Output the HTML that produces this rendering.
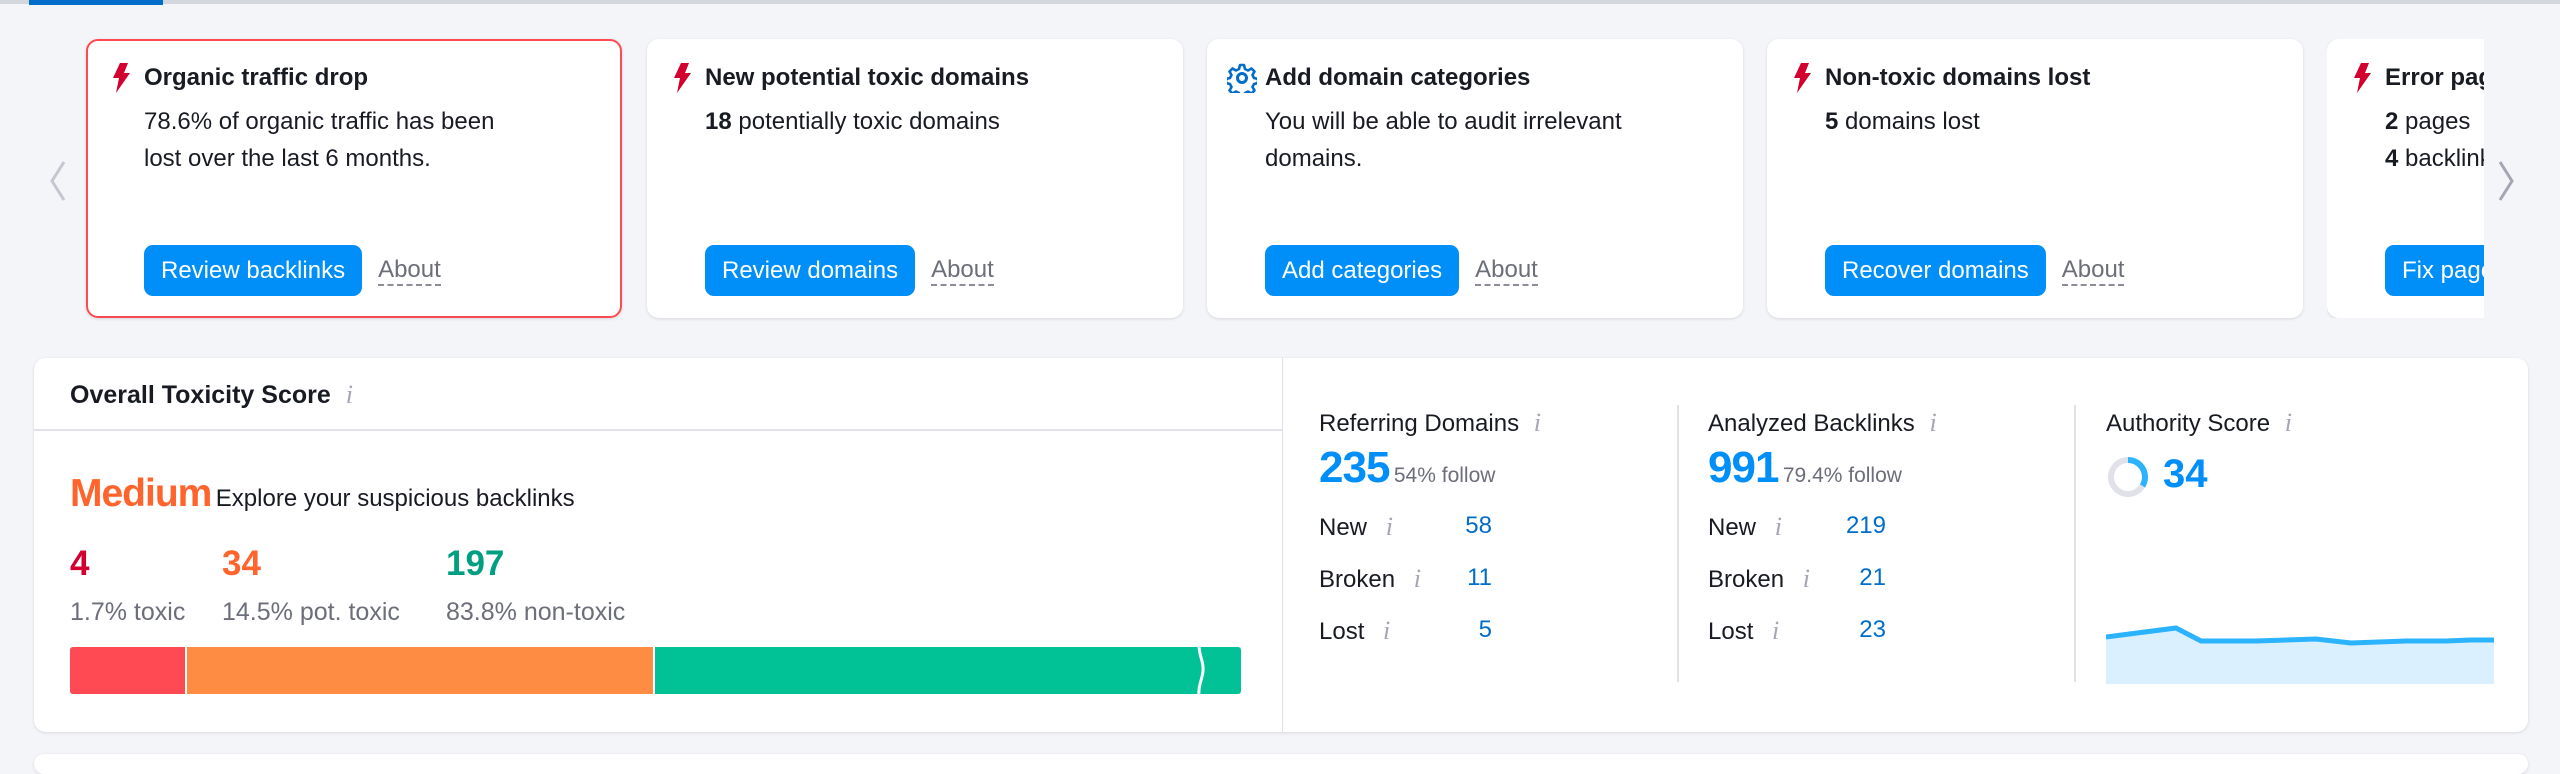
<!DOCTYPE html>
<html><head><meta charset="utf-8"><style>
*{box-sizing:border-box;margin:0;padding:0}
body{width:2560px;height:764px;background:#f4f5f9;font-family:"Liberation Sans",sans-serif;color:#191b23;position:relative;overflow:hidden}
.abs{position:absolute}
.card{position:absolute;top:39px;height:279px;width:536px;background:#fff;border-radius:12px;box-shadow:0 1px 3px rgba(0,0,0,.12)}
.card .ic{position:absolute;left:25px;top:24px}
.card .t{position:absolute;left:58px;top:24px;font-size:24px;font-weight:bold;line-height:30px;white-space:nowrap}
.card .b{position:absolute;left:58px;top:64px;font-size:24px;line-height:37px;width:380px}
.card .row{position:absolute;left:58px;top:206px;display:flex;align-items:center;white-space:nowrap}
.card .btn{height:51px;padding:0 17px;background:#008ff8;color:#fff;font-size:24px;line-height:51px;border-radius:9px}
.card .ab{margin-left:16px;font-size:24px;color:#6c6e79;line-height:28px;border-bottom:2px dashed #8a8c96}
.i{color:#a4a6b3;font-style:italic;font-family:"Liberation Serif",serif;font-size:26px}
.lbl{position:absolute;font-size:24px}
.val{position:absolute;font-size:24px;color:#006dca;text-align:right;width:60px}
</style></head><body>
<div class="abs" style="left:0;top:0;width:2560px;height:4px;background:#d5d7de"></div>
<div class="abs" style="left:29px;top:0;width:134px;height:5px;background:#006dca"></div>

<svg class="abs" style="left:46px;top:160px" width="22" height="42"><path d="M18 2 L6 21 L18 40" fill="none" stroke="#c5c7d0" stroke-width="3"/></svg>
<svg class="abs" style="left:2496px;top:160px" width="22" height="42"><path d="M4 2 L16 21 L4 40" fill="none" stroke="#a4a6b3" stroke-width="3"/></svg>

<div class="card" style="left:86px;outline:2px solid #ff4953;outline-offset:-2px">
<svg class="ic" width="20" height="30" viewBox="0 0 20 30"><path d="M9 0 H17 L13 10 H19 L5 30 L8 15 H2 Z" fill="#d1002f"/></svg>
<div class="t">Organic traffic drop</div>
<div class="b">78.6% of organic traffic has been lost over the last 6 months.</div>
<div class="row"><div class="btn">Review backlinks</div><div class="ab">About</div></div>
</div>
<div class="card" style="left:647px">
<svg class="ic" width="20" height="30" viewBox="0 0 20 30"><path d="M9 0 H17 L13 10 H19 L5 30 L8 15 H2 Z" fill="#d1002f"/></svg>
<div class="t">New potential toxic domains</div>
<div class="b"><b>18</b> potentially toxic domains</div>
<div class="row"><div class="btn">Review domains</div><div class="ab">About</div></div>
</div>
<div class="card" style="left:1207px">
<svg class="ic" width="30" height="30" viewBox="0 0 30 30" style="left:20px;top:24px"><circle cx="15" cy="15" r="4.5" fill="none" stroke="#006dca" stroke-width="3"/><path d="M13 2h4l1 4 3 1.5 3.5-2 3 3-2 3.5 1.5 3 4 1v4l-4 1-1.5 3 2 3.5-3 3-3.5-2-3 1.5-1 4h-4l-1-4-3-1.5-3.5 2-3-3 2-3.5-1.5-3-4-1v-4l4-1 1.5-3-2-3.5 3-3 3.5 2 3-1.5z" fill="none" stroke="#006dca" stroke-width="2.6" stroke-linejoin="round"/></svg>
<div class="t">Add domain categories</div>
<div class="b">You will be able to audit irrelevant domains.</div>
<div class="row"><div class="btn">Add categories</div><div class="ab">About</div></div>
</div>
<div class="card" style="left:1767px">
<svg class="ic" width="20" height="30" viewBox="0 0 20 30"><path d="M9 0 H17 L13 10 H19 L5 30 L8 15 H2 Z" fill="#d1002f"/></svg>
<div class="t">Non-toxic domains lost</div>
<div class="b"><b>5</b> domains lost</div>
<div class="row"><div class="btn">Recover domains</div><div class="ab">About</div></div>
</div>
<div class="abs" style="left:2327px;top:39px;width:157px;height:279px;overflow:hidden">
<div class="card" style="left:0;top:0">
<svg class="ic" width="20" height="30" viewBox="0 0 20 30"><path d="M9 0 H17 L13 10 H19 L5 30 L8 15 H2 Z" fill="#d1002f"/></svg>
<div class="t">Error pages</div>
<div class="b"><b>2</b> pages<br><b>4</b> backlinks</div>
<div class="row"><div class="btn">Fix pages</div></div>
</div></div>

<div class="abs" style="left:34px;top:358px;width:2494px;height:374px;background:#fff;border-radius:12px;box-shadow:0 1px 3px rgba(0,0,0,.12)"></div>
<div class="abs" style="left:1282px;top:358px;width:1px;height:374px;background:#e0e1e9"></div>
<div class="abs" style="left:34px;top:429px;width:1248px;height:2px;background:#e0e1e9"></div>
<div class="abs" style="left:70px;top:380px;font-size:25px;font-weight:bold;line-height:30px">Overall Toxicity Score <span class="i" style="font-weight:normal;margin-left:8px">i</span></div>
<div class="abs" style="left:70px;top:472px;white-space:nowrap"><span style="font-size:39px;font-weight:bold;color:#ff642d;letter-spacing:-1px">Medium</span> <span style="font-size:24px">Explore your suspicious backlinks</span></div>
<div class="abs" style="left:70px;top:544px;font-size:35px;font-weight:bold;color:#d1002f">4</div>
<div class="abs" style="left:222px;top:544px;font-size:35px;font-weight:bold;color:#ff642d">34</div>
<div class="abs" style="left:446px;top:544px;font-size:35px;font-weight:bold;color:#009f81">197</div>
<div class="abs" style="left:70px;top:598px;font-size:25px;color:#6c6e79">1.7% toxic</div>
<div class="abs" style="left:222px;top:598px;font-size:25px;color:#6c6e79">14.5% pot. toxic</div>
<div class="abs" style="left:446px;top:598px;font-size:25px;color:#6c6e79">83.8% non-toxic</div>
<div class="abs" style="left:70px;top:647px;width:1171px;height:47px;border-radius:3px;overflow:hidden;background:#00c296">
<div class="abs" style="left:0;top:0;width:115px;height:47px;background:#ff4953"></div>
<div class="abs" style="left:117px;top:0;width:466px;height:47px;background:#ff8c43"></div>
<div class="abs" style="left:115px;top:0;width:2px;height:47px;background:#fff"></div>
<div class="abs" style="left:583px;top:0;width:2px;height:47px;background:#fff"></div>
<svg class="abs" style="left:1124px;top:-2px" width="16" height="52"><path d="M5 0 C5 12 10 16 9 26 C8 36 4 40 5 52" fill="none" stroke="#fff" stroke-width="3"/></svg>
</div>

<div class="lbl" style="left:1319px;top:408px">Referring Domains <span class="i" style="margin-left:8px">i</span></div>
<div class="abs" style="left:1319px;top:443px;white-space:nowrap"><span style="font-size:44px;font-weight:bold;color:#008ff8;letter-spacing:-1px">235</span> <span style="font-size:21px;color:#6c6e79">54% follow</span></div>
<div class="lbl" style="left:1319px;top:512px">New <span class="i" style="margin-left:12px">i</span></div><div class="val" style="left:1432px;top:512px">58</div>
<div class="lbl" style="left:1319px;top:564px">Broken <span class="i" style="margin-left:12px">i</span></div><div class="val" style="left:1432px;top:564px">11</div>
<div class="lbl" style="left:1319px;top:616px">Lost <span class="i" style="margin-left:12px">i</span></div><div class="val" style="left:1432px;top:616px">5</div>
<div class="abs" style="left:1677px;top:405px;width:2px;height:277px;background:#e0e1e9"></div>
<div class="lbl" style="left:1708px;top:408px">Analyzed Backlinks <span class="i" style="margin-left:8px">i</span></div>
<div class="abs" style="left:1708px;top:443px;white-space:nowrap"><span style="font-size:44px;font-weight:bold;color:#008ff8;letter-spacing:-1px">991</span> <span style="font-size:21px;color:#6c6e79">79.4% follow</span></div>
<div class="lbl" style="left:1708px;top:512px">New <span class="i" style="margin-left:12px">i</span></div><div class="val" style="left:1826px;top:512px">219</div>
<div class="lbl" style="left:1708px;top:564px">Broken <span class="i" style="margin-left:12px">i</span></div><div class="val" style="left:1826px;top:564px">21</div>
<div class="lbl" style="left:1708px;top:616px">Lost <span class="i" style="margin-left:12px">i</span></div><div class="val" style="left:1826px;top:616px">23</div>
<div class="abs" style="left:2074px;top:405px;width:2px;height:277px;background:#e0e1e9"></div>
<div class="lbl" style="left:2106px;top:408px">Authority Score <span class="i" style="margin-left:8px">i</span></div>
<svg class="abs" style="left:2106px;top:455px" width="44" height="44"><circle cx="22" cy="22" r="17" fill="none" stroke="#e0e1e9" stroke-width="6"/><circle cx="22" cy="22" r="17" fill="none" stroke="#2bb3ff" stroke-width="6" stroke-dasharray="36 200" transform="rotate(-90 22 22)"/></svg>
<div class="abs" style="left:2163px;top:452px;font-size:40px;font-weight:bold;color:#008ff8">34</div>
<svg class="abs" style="left:2106px;top:620px" width="388" height="64"><path d="M0 17 L70 8 L95 21 L150 21 L210 19 L245 23 L300 21 L340 21 L365 20 L388 20 L388 64 L0 64Z" fill="#dbf0ff"/><path d="M0 17 L70 8 L95 21 L150 21 L210 19 L245 23 L300 21 L340 21 L365 20 L388 20" fill="none" stroke="#2bb3ff" stroke-width="5"/></svg>

<div class="abs" style="left:34px;top:754px;width:2494px;height:20px;background:#fff;border-radius:12px;box-shadow:0 1px 3px rgba(0,0,0,.12)"></div>
</body></html>
